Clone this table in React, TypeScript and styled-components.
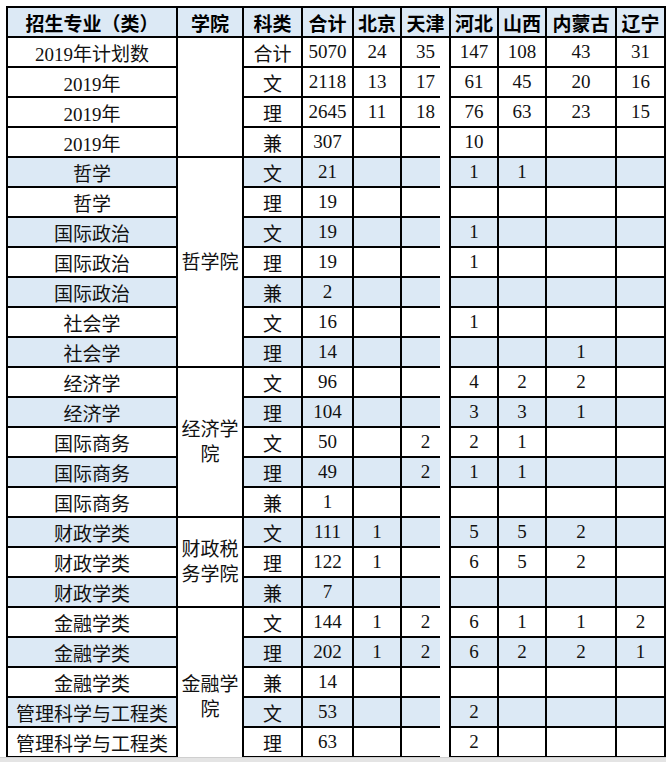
import { createGlobalStyle, styled } from "styled-components";

const Colors = {
    LINE: "#000",
    STRIPE: "#dce9f5",
    WHITE: "#fff",
    TEXT: "#111",
};

type Row = {
    major: string;
    kind: string;
    values: string[];
};

type Group = {
    college: string;
    rows: Row[];
};

const HEADERS = [
    "招生专业（类）",
    "学院",
    "科类",
    "合计",
    "北京",
    "天津",
    "河北",
    "山西",
    "内蒙古",
    "辽宁",
];

const r = (major: string, kind: string, ...values: (string | number)[]): Row => {
    const filled = values.map((v) => String(v));
    while (filled.length < 7) filled.push("");
    return { major, kind, values: filled };
};

const GROUPS: Group[] = [
    {
        college: "",
        rows: [
            r("2019年计划数", "合计", 5070, 24, 35, 147, 108, 43, 31),
            r("2019年", "文", 2118, 13, 17, 61, 45, 20, 16),
            r("2019年", "理", 2645, 11, 18, 76, 63, 23, 15),
            r("2019年", "兼", 307, "", "", 10),
        ],
    },
    {
        college: "哲学院",
        rows: [
            r("哲学", "文", 21, "", "", 1, 1),
            r("哲学", "理", 19),
            r("国际政治", "文", 19, "", "", 1),
            r("国际政治", "理", 19, "", "", 1),
            r("国际政治", "兼", 2),
            r("社会学", "文", 16, "", "", 1),
            r("社会学", "理", 14, "", "", "", "", 1),
        ],
    },
    {
        college: "经济学院",
        rows: [
            r("经济学", "文", 96, "", "", 4, 2, 2),
            r("经济学", "理", 104, "", "", 3, 3, 1),
            r("国际商务", "文", 50, "", 2, 2, 1),
            r("国际商务", "理", 49, "", 2, 1, 1),
            r("国际商务", "兼", 1),
        ],
    },
    {
        college: "财政税务学院",
        rows: [
            r("财政学类", "文", 111, 1, "", 5, 5, 2),
            r("财政学类", "理", 122, 1, "", 6, 5, 2),
            r("财政学类", "兼", 7),
        ],
    },
    {
        college: "金融学院",
        rows: [
            r("金融学类", "文", 144, 1, 2, 6, 1, 1, 2),
            r("金融学类", "理", 202, 1, 2, 6, 2, 2, 1),
            r("金融学类", "兼", 14),
            r("管理科学与工程类", "文", 53, "", "", 2),
            r("管理科学与工程类", "理", 63, "", "", 2),
            // row that runs past the bottom of the window, only its top edge shows
            r("", ""),
        ],
    },
];

// the first four summary rows are plain, the stripes start with 哲学
const isStriped = (index: number) => index >= 4 && (index - 4) % 2 === 0;

export default function App() {
    let rowIndex = 0;
    return (
        <>
            <GlobalStyle />
            <Page>
                <Table>
                    {HEADERS.map((h) => (
                        <HeadCell key={h}>{h}</HeadCell>
                    ))}
                    {GROUPS.map((group, g) =>
                        group.rows.map((row, i) => {
                            const striped = isStriped(rowIndex++);
                            return (
                                <Line key={`${g}-${i}`}>
                                    <Cell $striped={striped}>{row.major}</Cell>
                                    {i === 0 && (
                                        <CollegeCell $span={group.rows.length}>
                                            {group.college}
                                        </CollegeCell>
                                    )}
                                    <Cell $striped={striped}>{row.kind}</Cell>
                                    {row.values.map((v, c) => (
                                        <Cell
                                            key={c}
                                            $striped={striped}
                                            $cut={c === 2}
                                        >
                                            {v}
                                        </Cell>
                                    ))}
                                </Line>
                            );
                        })
                    )}
                </Table>
            </Page>
            <BottomBar />
        </>
    );
}

const GlobalStyle = createGlobalStyle`
    html, body {
        margin: 0;
        padding: 0;
        background: #fff;
        overflow: hidden;
    }
`;

const Page = styled.div`
    padding: 6px 0 0 6px;
`;

const Table = styled.div`
    display: grid;
    grid-template-columns: 168px 64px 57px 49px 46px 47px 46px 46px 68px 47px;
    grid-auto-rows: 28px;
    gap: 2px;
    padding: 2px;
    width: max-content;
    background: ${Colors.LINE};
`;

const Line = styled.div`
    display: contents;
`;

const BaseCell = styled.div`
    display: flex;
    align-items: center;
    justify-content: center;
    text-align: center;
    color: ${Colors.TEXT};
    white-space: nowrap;
`;

const HeadCell = styled(BaseCell)`
    background: ${Colors.STRIPE};
    font-family: "Noto Sans CJK SC", "Noto Sans", sans-serif;
    font-weight: 700;
    font-size: 19px;
    color: #000;
`;

const Cell = styled(BaseCell)<{ $striped?: boolean; $cut?: boolean }>`
    position: relative;
    background: ${({ $striped }) => ($striped ? Colors.STRIPE : Colors.WHITE)};
    font-family: "Liberation Serif", "Noto Sans CJK SC", serif;
    font-size: 19px;
    ${({ $cut }) =>
        $cut &&
        `
        &::after {
            content: "";
            position: absolute;
            right: 0;
            top: 0;
            bottom: -2px;
            width: 9px;
            background: ${Colors.WHITE};
        }
    `}
`;

const CollegeCell = styled(BaseCell)<{ $span: number }>`
    grid-row: span ${({ $span }) => $span};
    background: ${Colors.WHITE};
    font-family: "Liberation Serif", "Noto Sans CJK SC", serif;
    font-size: 19px;
    line-height: 25px;
    white-space: normal;
    word-break: break-all;
    padding: 0 1px;
`;

const BottomBar = styled.div`
    position: fixed;
    left: 0;
    right: 0;
    bottom: 0;
    height: 4px;
    background: #e4e4e4;
    border-top: 1px solid #cfcfcf;
`;
